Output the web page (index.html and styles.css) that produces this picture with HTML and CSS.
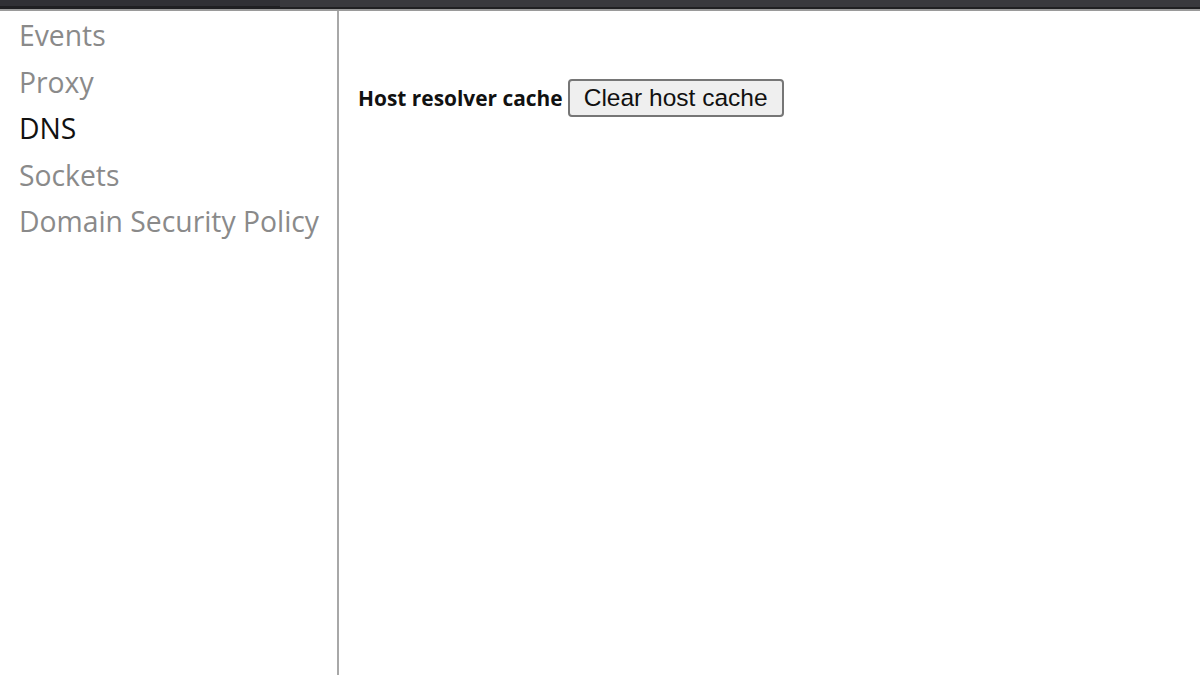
FILE: index.html
```html
<!DOCTYPE html>
<html>
<head>
<meta charset="utf-8">
<link rel="stylesheet" href="styles.css">
</head>
<body>
<div class="topbar"><div class="topbar-left"></div><div class="topbar-right"></div></div>
<div class="layout">
  <nav class="sidebar">
    <a class="nav-item">Events</a>
    <a class="nav-item">Proxy</a>
    <a class="nav-item active">DNS</a>
    <a class="nav-item">Sockets</a>
    <a class="nav-item">Domain Security Policy</a>
  </nav>
  <main class="content">
    <div class="row">
      <span class="label">Host resolver cache</span>
      <button class="btn">Clear host cache</button>
    </div>
  </main>
</div>
</body>
</html>
```
FILE: styles.css
```css
html, body {
  margin: 0;
  padding: 0;
  background: #fff;
  height: 100%;
  overflow: hidden;
}
.topbar {
  height: 9px;
  display: flex;
  border-bottom: 2px solid #9a9a9a;
}
.topbar-left {
  width: 280px;
  background: linear-gradient(#303035 0, #303035 6px, #1f1f22 6px);
}
.topbar-right {
  flex: 1;
  background: linear-gradient(#39393d 0, #39393d 7px, #202022 7px);
}
.layout {
  display: flex;
  height: calc(100% - 11px);
}
.sidebar {
  width: 339px;
  border-right: 2px solid #a8a8a8;
  padding: 1px 0 0 19px;
  box-sizing: border-box;
  display: flex;
  flex-direction: column;
}
.nav-item {
  font-family: "Open Sans", "Noto Sans", sans-serif;
  font-size: 28.3px;
  line-height: 46.5px;
  color: #8a8a8a;
  white-space: nowrap;
}
.nav-item.active {
  color: #111;
}
.content {
  flex: 1;
  padding: 68px 0 0 19px;
}
.row {
  display: flex;
  align-items: center;
  gap: 5px;
}
.label {
  font-family: "Open Sans", "Noto Sans", sans-serif;
  font-weight: bold;
  font-size: 20.9px;
  color: #111;
}
.btn {
  font-family: "Liberation Sans", Arial, sans-serif;
  font-size: 24.5px;
  color: #111;
  background: #efefef;
  border: 2px solid #767676;
  border-radius: 4px;
  height: 38px;
  width: 216px;
  padding: 0;
}
```
